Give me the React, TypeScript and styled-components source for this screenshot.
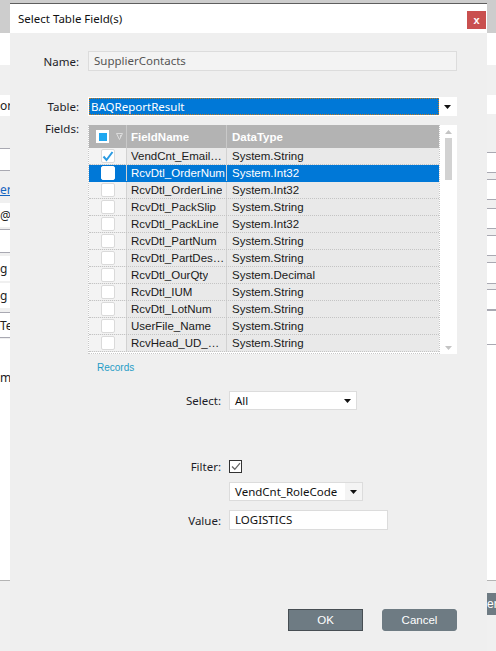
import React from 'react'
import styled, { createGlobalStyle } from 'styled-components'

const GlobalStyle = createGlobalStyle`
  * { box-sizing: border-box; }
  html, body { margin: 0; padding: 0; }
  body {
    width: 496px;
    height: 651px;
    overflow: hidden;
    background: #f0f0f0;
    font-family: "Noto Sans", "Liberation Sans", sans-serif;
  }
`

// ---- the page behind the dialog ----

const Screen = styled.div`
    position: relative;
    width: 496px;
    height: 651px;
    overflow: hidden;
    display: flex;
    flex-direction: column;
    background: #f0f0f0;
`

const AppHeader = styled.div`
    height: 33px;
    flex-shrink: 0;
    background: #cdcdcd;
`

const AppBand = styled.div`
    height: 32px;
    flex-shrink: 0;
    background: #fff;
`

const AppContent = styled.div`
    height: 515px;
    flex-shrink: 0;
    display: flex;
    justify-content: space-between;
`

const Strip = styled.div<{ $w: number }>`
    width: ${p => p.$w}px;
    display: flex;
    flex-direction: column;
    overflow: hidden;
`

const StripBox = styled.div<{ $mt: number; $h?: number; $lines?: boolean; $grow?: boolean }>`
    margin-top: ${p => p.$mt}px;
    height: ${p => (p.$h ? `${p.$h}px` : 'auto')};
    flex: ${p => (p.$grow ? 1 : 'none')};
    background: #fff;
    border-top: ${p => (p.$lines ? '1px solid #a9a9b2' : 'none')};
    border-bottom: ${p => (p.$lines ? '1px solid #a9a9b2' : 'none')};
    display: flex;
    align-items: ${p => (p.$grow ? 'flex-start' : 'center')};
    padding-top: ${p => (p.$grow ? '30px' : '0')};
    font-size: 12px;
    color: #222;
    white-space: nowrap;
`

const StripLink = styled.a`
    margin-top: 12px;
    height: 14px;
    font-size: 12px;
    line-height: 14px;
    color: #1565c0;
    text-decoration: underline;
    white-space: nowrap;
`

const AppFooter = styled.div`
    flex: 1;
    border-top: 1px solid #b4b4b4;
    display: flex;
    justify-content: flex-end;
    align-items: flex-start;
    padding-top: 12px;
`

const PageButton = styled.div`
    width: 9px;
    height: 22px;
    background: #6e7b83;
    color: #fff;
    font-family: "Liberation Sans", sans-serif;
    font-size: 12px;
    line-height: 22px;
    overflow: hidden;
    white-space: nowrap;
`

// ---- dialog ----

const Dialog = styled.div`
    position: absolute;
    left: 10px;
    top: 3px;
    width: 477px;
    bottom: 0;
    display: flex;
    flex-direction: column;
    background: #efefef;
`

const TitleBar = styled.div`
    height: 30px;
    flex-shrink: 0;
    background: #fff;
    border-top: 1px solid #5e5e5e;
    display: flex;
    align-items: center;
    justify-content: space-between;
    padding: 0 1px 0 8px;
`

const Title = styled.h1`
    margin: 0;
    font-size: 11.5px;
    font-weight: 400;
    color: #111;
`

const CloseBtn = styled.button`
    width: 19px;
    height: 18px;
    margin-top: 3px;
    padding: 0;
    border: none;
    background: #c9504f;
    color: #fff;
    font-family: "Liberation Sans", sans-serif;
    font-size: 11px;
    font-weight: 700;
    line-height: 16px;
`

const Body = styled.div`
    flex: 1;
    padding: 18px 30px 0 0;
    display: flex;
    flex-direction: column;
`

const Row = styled.div<{ $label: number; $gap: number; $mt: number; $align?: string }>`
    display: grid;
    grid-template-columns: ${p => p.$label}px 1fr;
    column-gap: ${p => p.$gap}px;
    align-items: ${p => p.$align ?? 'center'};
    margin-top: ${p => p.$mt}px;
`

const Label = styled.label<{ $raise?: number }>`
    text-align: right;
    font-size: 11.5px;
    line-height: 13px;
    color: #1d1d28;
    margin-top: ${p => (p.$raise ? `${p.$raise}px` : '0')};
`

const TextBox = styled.div<{ $w?: number; $readonly?: boolean }>`
    width: ${p => (p.$w ? `${p.$w}px` : '100%')};
    height: 20px;
    background: ${p => (p.$readonly ? '#f3f3f3' : '#fff')};
    border: 1px solid #dcdcdc;
    padding: 0 5px;
    font-size: 11.5px;
    line-height: 18px;
    color: ${p => (p.$readonly ? '#555' : '#111')};
`

const Combo = styled.div<{ $w?: number; $focused?: boolean }>`
    width: ${p => (p.$w ? `${p.$w}px` : '100%')};
    height: 19px;
    display: flex;
    border: 1px solid ${p => (p.$focused ? '#fff' : '#dcdcdc')};
    background: #fff;
`

const ComboValue = styled.div<{ $focused?: boolean }>`
    flex: 1;
    padding: 0 5px;
    font-size: 11.5px;
    line-height: 17px;
    color: ${p => (p.$focused ? '#fff' : '#111')};
    background: ${p => (p.$focused ? '#0078d7' : '#fff')};
    outline: ${p => (p.$focused ? '1px dotted #c47a1e' : 'none')};
    outline-offset: -1px;
    padding-left: ${p => (p.$focused ? '2px' : '5px')};
`

const ComboArrow = styled.div<{ $shade?: boolean }>`
    width: 17px;
    display: flex;
    align-items: center;
    justify-content: center;
    background: ${p => (p.$shade ? '#f4f4f4' : '#fff')};
`

const Grid = styled.div`
    width: 100%;
    height: 229px;
    display: flex;
    background: #fff;
`

const GridMain = styled.div`
    flex: 1;
    display: flex;
    flex-direction: column;
    border-left: 1px dotted #c8c8c8;
    border-right: 1px dotted #c8c8c8;
    border-bottom: 1px dotted #c8c8c8;
    font-family: "Liberation Sans", Arial, sans-serif;
    font-size: 11.5px;
`

const HeaderRow = styled.div`
    height: 23px;
    display: flex;
    background: #b3b3b3;
    color: #fff;
    font-weight: 700;
`

const DataRow = styled.div<{ $selected?: boolean }>`
    height: 17px;
    display: flex;
    background: ${p => (p.$selected ? '#0078d7' : '#e9e9e9')};
    color: ${p => (p.$selected ? '#fff' : '#1a1a1a')};
    border-bottom: 1px dotted ${p => (p.$selected ? '#0078d7' : '#c4c4c4')};
`

const CheckCell = styled.div<{ $header?: boolean; $selected?: boolean }>`
    width: 38px;
    flex-shrink: 0;
    display: flex;
    align-items: center;
    justify-content: ${p => (p.$header ? 'flex-start' : 'center')};
    gap: 7px;
    padding-left: ${p => (p.$header ? '7px' : '0')};
    border-right: 1px solid ${p => (p.$header ? '#c9c9c9' : '#d2d2d2')};
    background: ${p => (p.$header ? 'transparent' : p.$selected ? '#0078d7' : '#f3f3f3')};
`

const Cell = styled.div<{ $w?: number; $header?: boolean }>`
    width: ${p => (p.$w ? `${p.$w}px` : 'auto')};
    flex: ${p => (p.$w ? 'none' : 1)};
    min-width: 0;
    padding: 0 1px 0 ${p => (p.$w ? 4 : 5)}px;
    display: flex;
    align-items: center;
    overflow: hidden;
    border-right: ${p => (p.$w ? `1px solid ${p.$header ? '#c9c9c9' : '#d2d2d2'}` : 'none')};

    span {
        min-width: 0;
        overflow: hidden;
        white-space: nowrap;
        text-overflow: ellipsis;
    }
`

const RowBox = styled.div<{ $selected?: boolean }>`
    width: 14px;
    height: 14px;
    background: #fff;
    border: 1px solid ${p => (p.$selected ? '#fff' : '#dadada')};
    border-radius: 2px;
    display: flex;
    align-items: center;
    justify-content: center;
`

const HeaderBox = styled.div`
    width: 13px;
    height: 13px;
    background: #fff;
    display: flex;
    align-items: center;
    justify-content: center;

    &::after {
        content: '';
        width: 8px;
        height: 8px;
        background: #1ea7f0;
    }
`

const ScrollBar = styled.div`
    width: 17px;
    flex-shrink: 0;
    display: flex;
    flex-direction: column;
    align-items: center;
    padding: 5px 0 4px;
`

const ScrollThumb = styled.div`
    width: 7px;
    height: 42px;
    margin-top: 4px;
    background: #d2d2d2;
`

const ScrollSpace = styled.div`
    flex: 1;
`

const RecordsLink = styled.a`
    display: block;
    margin-top: 4px;
    padding-left: 9px;
    font-family: "Liberation Sans", Arial, sans-serif;
    font-size: 10px;
    line-height: 20px;
    color: #1f9cc6;
    text-decoration: none;
`

const FilterBox = styled.div`
    width: 13px;
    height: 13px;
    border: 1px solid #333;
    background: #fff;
    display: flex;
    align-items: center;
    justify-content: center;
`

const Buttons = styled.div`
    margin-top: 79px;
    display: flex;
    justify-content: flex-end;
    gap: 19px;
`

const DialogButton = styled.button<{ $rounded?: boolean }>`
    width: 75px;
    height: 22px;
    padding: 0;
    background: #6e7b83;
    border: 1px solid ${p => (p.$rounded ? '#6e7b83' : '#474e53')};
    border-radius: ${p => (p.$rounded ? '3px' : '0')};
    color: #fff;
    font-family: "Liberation Sans", Arial, sans-serif;
    font-size: 11.5px;
`

function DownArrow({ color = '#111' }: { color?: string }) {
    return (
        <svg width="7" height="4" viewBox="0 0 7 4">
            <polygon points="0,0 7,0 3.5,4" fill={color} />
        </svg>
    )
}

function UpArrow() {
    return (
        <svg width="7" height="4" viewBox="0 0 7 4">
            <polygon points="0,4 7,4 3.5,0" fill="#c4c4c4" />
        </svg>
    )
}

function FilterIcon() {
    return (
        <svg width="7" height="7" viewBox="0 0 7 7">
            <path d="M0.5 0.5 H6.5 L3.5 6.5 Z" fill="none" stroke="#dcdcdc" strokeWidth="1" />
            <path d="M4.5 2 V4" stroke="#dcdcdc" strokeWidth="1" />
        </svg>
    )
}

function BlueCheck() {
    return (
        <svg width="12" height="11" viewBox="0 0 12 11">
            <path d="M1.5 5.5 L4.5 9 L10.5 1" fill="none" stroke="#2b9be2" strokeWidth="2" />
        </svg>
    )
}

function GrayCheck() {
    return (
        <svg width="10" height="9" viewBox="0 0 10 9">
            <path d="M1 4.5 L3.8 7.3 L9 1.2" fill="none" stroke="#666" strokeWidth="1.3" />
        </svg>
    )
}

type Field = { name: string; type: string; checked?: boolean; selected?: boolean }

const fields: Field[] = [
    { name: 'VendCnt_EmailAddress', type: 'System.String', checked: true },
    { name: 'RcvDtl_OrderNum', type: 'System.Int32', selected: true },
    { name: 'RcvDtl_OrderLine', type: 'System.Int32' },
    { name: 'RcvDtl_PackSlip', type: 'System.String' },
    { name: 'RcvDtl_PackLine', type: 'System.Int32' },
    { name: 'RcvDtl_PartNum', type: 'System.String' },
    { name: 'RcvDtl_PartDescription', type: 'System.String' },
    { name: 'RcvDtl_OurQty', type: 'System.Decimal' },
    { name: 'RcvDtl_IUM', type: 'System.String' },
    { name: 'RcvDtl_LotNum', type: 'System.String' },
    { name: 'UserFile_Name', type: 'System.String' },
    { name: 'RcvHead_UD_Tracking', type: 'System.String' },
]

export default function App() {
    return (
        <Screen>
            <GlobalStyle />

            <AppHeader />
            <AppBand />
            <AppContent>
                <Strip $w={10}>
                    <StripBox $mt={30} $h={21}>orm</StripBox>
                    <StripBox $mt={32} $h={23} $lines />
                    <StripLink>erC</StripLink>
                    <StripBox $mt={6} $h={24}>@</StripBox>
                    <StripBox $mt={2} $h={24} $lines />
                    <StripBox $mt={3} $h={25}>g F</StripBox>
                    <StripBox $mt={2} $h={25}>g F</StripBox>
                    <StripBox $mt={4} $h={26} $lines>Tex</StripBox>
                    <StripBox $mt={1} $grow>m</StripBox>
                </Strip>
                <Strip $w={9}>
                    <StripBox $mt={30} $h={19} />
                    <StripBox $mt={38} $h={21} $lines />
                    <StripBox $mt={6} $h={21} $lines />
                    <StripBox $mt={8} $h={21} $lines />
                    <StripBox $mt={6} $h={21} $lines />
                    <StripBox $mt={6} $h={22} $lines />
                    <StripBox $mt={5} $h={21} $lines />
                    <StripBox $mt={0} $h={35} $lines />
                    <StripBox $mt={0} $grow />
                </Strip>
            </AppContent>
            <AppFooter>
                <PageButton>erb</PageButton>
            </AppFooter>

            <Dialog>
                <TitleBar>
                    <Title>Select Table Field(s)</Title>
                    <CloseBtn title="Close">x</CloseBtn>
                </TitleBar>

                <Body>
                    <Row $label={69} $gap={9} $mt={0}>
                        <Label>Name:</Label>
                        <TextBox $readonly>SupplierContacts</TextBox>
                    </Row>

                    <Row $label={69} $gap={9} $mt={26}>
                        <Label>Table:</Label>
                        <Combo $focused>
                            <ComboValue $focused>BAQReportResult</ComboValue>
                            <ComboArrow>
                                <DownArrow />
                            </ComboArrow>
                        </Combo>
                    </Row>

                    <Row $label={69} $gap={9} $mt={9} $align="start">
                        <Label $raise={-3}>Fields:</Label>
                        <div>
                            <Grid>
                                <GridMain>
                                    <HeaderRow>
                                        <CheckCell $header>
                                            <HeaderBox />
                                            <FilterIcon />
                                        </CheckCell>
                                        <Cell $w={100} $header><span>FieldName</span></Cell>
                                        <Cell $header><span>DataType</span></Cell>
                                    </HeaderRow>

                                    {fields.map(f => (
                                        <DataRow key={f.name} $selected={f.selected}>
                                            <CheckCell $selected={f.selected}>
                                                <RowBox $selected={f.selected}>
                                                    {f.checked && <BlueCheck />}
                                                </RowBox>
                                            </CheckCell>
                                            <Cell $w={100}><span>{f.name}</span></Cell>
                                            <Cell><span>{f.type}</span></Cell>
                                        </DataRow>
                                    ))}
                                </GridMain>

                                <ScrollBar>
                                    <UpArrow />
                                    <ScrollThumb />
                                    <ScrollSpace />
                                    <DownArrow color="#c4c4c4" />
                                </ScrollBar>
                            </Grid>
                            <RecordsLink>Records</RecordsLink>
                        </div>
                    </Row>

                    <Row $label={211} $gap={8} $mt={13}>
                        <Label>Select:</Label>
                        <Combo $w={128}>
                            <ComboValue>All</ComboValue>
                            <ComboArrow>
                                <DownArrow />
                            </ComboArrow>
                        </Combo>
                    </Row>

                    <Row $label={211} $gap={8} $mt={50}>
                        <Label>Filter:</Label>
                        <FilterBox>
                            <GrayCheck />
                        </FilterBox>
                    </Row>

                    <Row $label={211} $gap={8} $mt={9}>
                        <span />
                        <Combo $w={134}>
                            <ComboValue>VendCnt_RoleCode</ComboValue>
                            <ComboArrow $shade>
                                <DownArrow />
                            </ComboArrow>
                        </Combo>
                    </Row>

                    <Row $label={211} $gap={8} $mt={9}>
                        <Label>Value:</Label>
                        <TextBox $w={159}>LOGISTICS</TextBox>
                    </Row>

                    <Buttons>
                        <DialogButton>OK</DialogButton>
                        <DialogButton $rounded>Cancel</DialogButton>
                    </Buttons>
                </Body>
            </Dialog>
        </Screen>
    )
}
